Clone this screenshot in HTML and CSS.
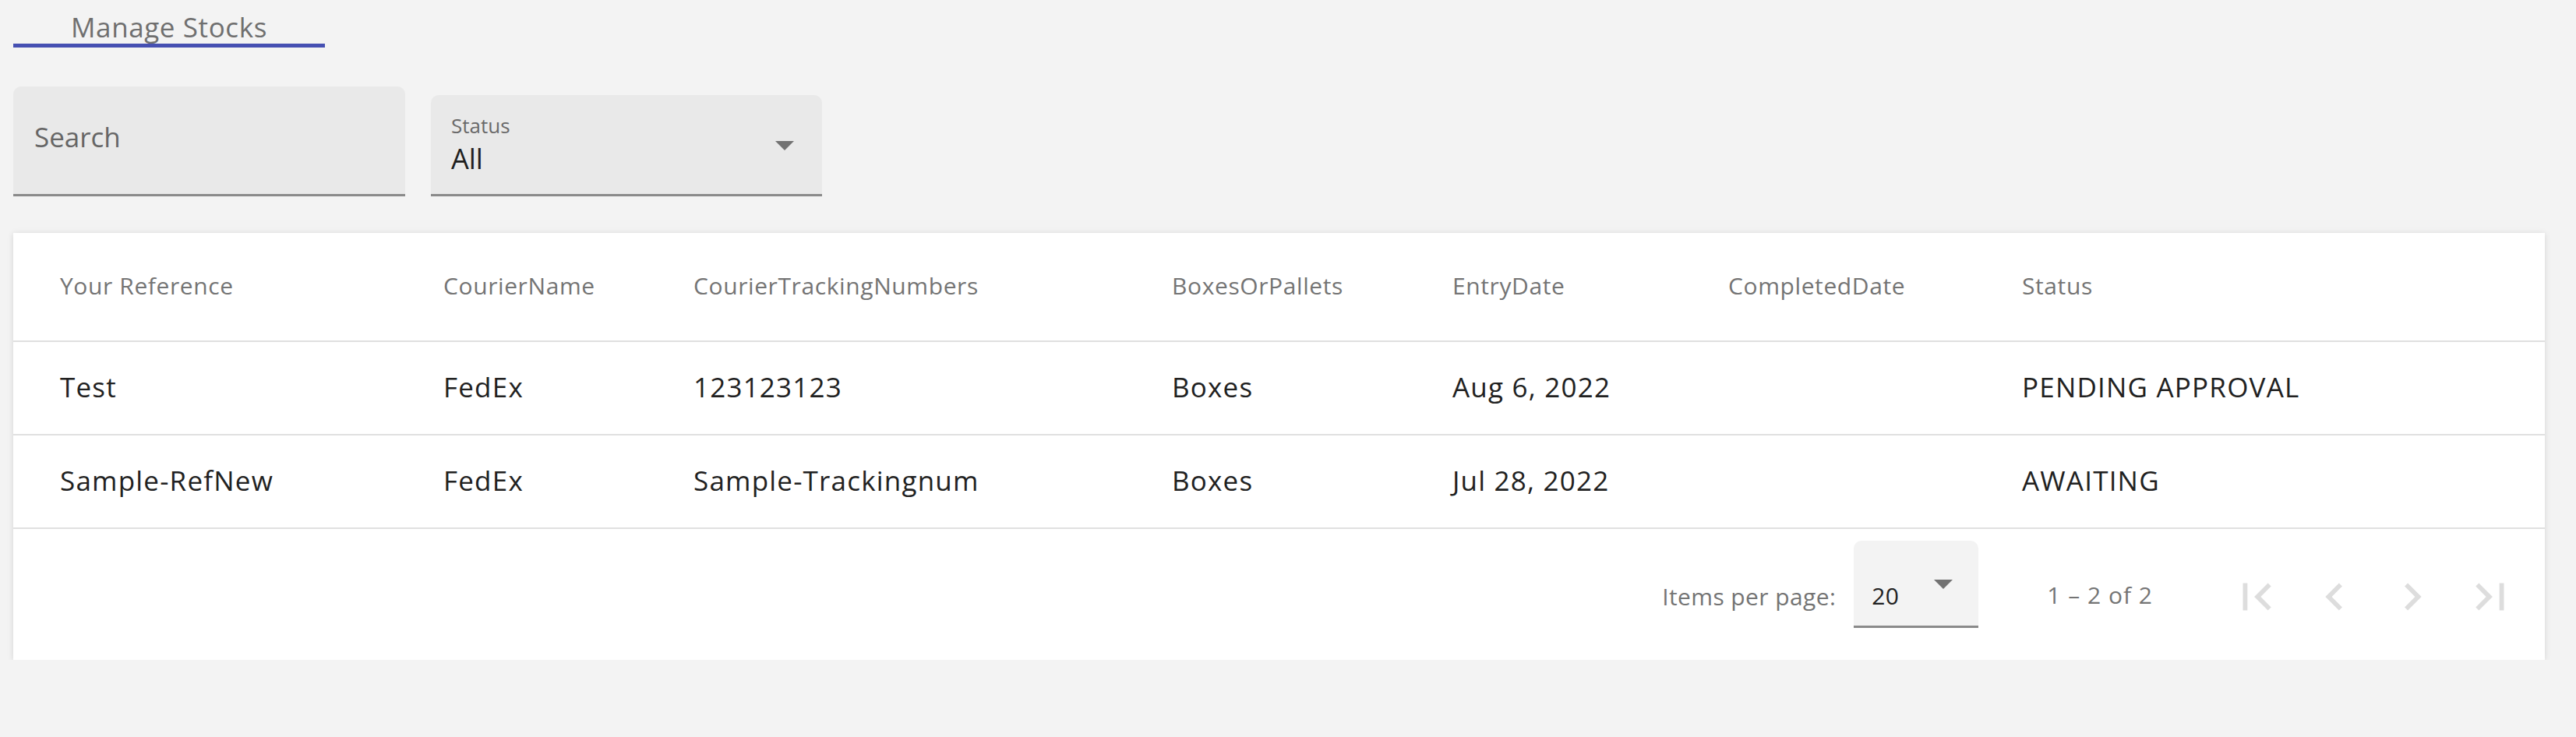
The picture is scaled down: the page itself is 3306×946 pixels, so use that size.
FILE: index.html
```html
<!DOCTYPE html>
<html lang="en">
<head>
  <meta charset="UTF-8" />
  <title>Manage Stocks</title>
  <link rel="stylesheet" href="styles.css">
</head>
<body>
  <div class="page">
    <div class="tabs">
      <div class="tab active">Manage Stocks</div>
    </div>

    <div class="filters">
      <div class="field search">
        <span class="placeholder">Search</span>
      </div>
      <div class="field status">
        <div class="field-text">
          <div class="label">Status</div>
          <div class="value">All</div>
        </div>
        <span class="arrow"></span>
      </div>
    </div>

    <div class="card">
      <table>
        <colgroup>
          <col class="c-ref">
          <col class="c-courier">
          <col class="c-tracking">
          <col class="c-boxes">
          <col class="c-entry">
          <col class="c-completed">
          <col class="c-status">
        </colgroup>
        <thead>
          <tr>
            <th>Your Reference</th>
            <th>CourierName</th>
            <th>CourierTrackingNumbers</th>
            <th>BoxesOrPallets</th>
            <th>EntryDate</th>
            <th>CompletedDate</th>
            <th>Status</th>
          </tr>
        </thead>
        <tbody id="stock-table">
          <tr>
            <td>Test</td>
            <td>FedEx</td>
            <td>123123123</td>
            <td>Boxes</td>
            <td>Aug 6, 2022</td>
            <td></td>
            <td>PENDING APPROVAL</td>
          </tr>
          <tr>
            <td>Sample-RefNew</td>
            <td>FedEx</td>
            <td>Sample-Trackingnum</td>
            <td>Boxes</td>
            <td>Jul 28, 2022</td>
            <td></td>
            <td>AWAITING</td>
          </tr>
        </tbody>
      </table>

      <div class="paginator">
        <span class="page-label">Items per page:</span>
        <div class="page-size">
          <span>20</span>
          <span class="arrow"></span>
        </div>
        <span class="range">1 &ndash; 2 of 2</span>
        <button class="nav" disabled>
          <svg viewBox="0 0 24 24"><path d="M18.41 16.59L13.82 12l4.59-4.59L17 6l-6 6 6 6zM6 6h2v12H6z"/></svg>
        </button>
        <button class="nav" disabled>
          <svg viewBox="0 0 24 24"><path d="M15.41 7.41L14 6l-6 6 6 6 1.41-1.41L10.83 12z"/></svg>
        </button>
        <button class="nav" disabled>
          <svg viewBox="0 0 24 24"><path d="M10 6L8.59 7.41 13.17 12l-4.58 4.59L10 18l6-6z"/></svg>
        </button>
        <button class="nav" disabled>
          <svg viewBox="0 0 24 24"><path d="M5.59 7.41L10.18 12l-4.59 4.59L7 18l6-6-6-6zM16 6h2v12h-2z"/></svg>
        </button>
      </div>
    </div>
  </div>
</body>
</html>
```

FILE: styles.css
```css
body {
  margin: 0;
  background-color: #f3f3f3;
  font-family: "Open Sans", "Noto Sans", sans-serif;
  color: #212121;
}
.page {
  padding: 0 40px 0 17px;
}

/* tabs */
.tabs {
  display: flex;
}
.tab {
  box-sizing: border-box;
  width: 400px;
  height: 61px;
  padding-top: 17px;
  text-align: center;
  font-size: 35px;
  line-height: 35px;
  letter-spacing: 0.6px;
  color: #6f6f6f;
}
.tab.active {
  border-bottom: 5px solid #4650b2;
}

/* filters */
.filters {
  display: flex;
  align-items: flex-end;
  gap: 33px;
  margin-top: 50px;
}
.field {
  box-sizing: border-box;
  background-color: #e9e9e9;
  border-radius: 10px 10px 0 0;
  border-bottom: 3px solid #8a8a8a;
}
.search {
  width: 503px;
  height: 141px;
  padding: 0 0 9px 27px;
  display: flex;
  align-items: center;
}
.placeholder {
  font-size: 35px;
  color: #666;
}
.status {
  width: 502px;
  height: 130px;
  padding: 21px 36px 0 26px;
  display: flex;
  align-items: flex-start;
}
.field-text {
  flex: 1;
}
.label {
  font-size: 26px;
  color: #6a6a6a;
}
.value {
  font-size: 36px;
  color: #1f1f1f;
}
.arrow {
  width: 0;
  height: 0;
  border-left: 12px solid transparent;
  border-right: 12px solid transparent;
  border-top: 12px solid #727272;
}
.status .arrow {
  margin-top: 38px;
}

/* table card */
.card {
  margin-top: 47px;
  background-color: #fff;
  box-shadow: 0 1px 8px rgba(0, 0, 0, 0.12);
}
table {
  width: 100%;
  table-layout: fixed;
  border-collapse: collapse;
}
.c-ref { width: 552px; }
.c-courier { width: 321px; }
.c-tracking { width: 614px; }
.c-boxes { width: 360px; }
.c-entry { width: 354px; }
.c-completed { width: 377px; }
.c-status { width: 671px; }
th, td {
  padding: 0 0 3px;
  text-align: left;
  font-weight: normal;
  white-space: nowrap;
  border-bottom: 2px solid #e0e0e0;
}
th:first-child, td:first-child {
  padding-left: 60px;
}
th {
  height: 135px;
  font-size: 30px;
  letter-spacing: 0.6px;
  color: #747474;
}
td {
  height: 115px;
  font-size: 35px;
  letter-spacing: 1.2px;
  color: #212121;
}

/* paginator */
.paginator {
  height: 168px;
  padding-right: 20px;
  display: flex;
  align-items: center;
  justify-content: flex-end;
  font-size: 30px;
  letter-spacing: 0.4px;
  color: #747474;
}
.page-label {
  margin-right: 23px;
  padding-top: 4px;
}
.page-size {
  box-sizing: border-box;
  align-self: flex-start;
  margin-top: 15px;
  width: 160px;
  height: 112px;
  padding: 50px 33px 0 23px;
  display: flex;
  align-items: flex-start;
  justify-content: space-between;
  background-color: #f3f3f3;
  border-radius: 10px 10px 0 0;
  border-bottom: 3px solid #8a8a8a;
}
.page-size span:first-child {
  color: #212121;
}
.range {
  margin: 0 83px 0 88px;
  letter-spacing: 1px;
}
.nav {
  width: 100px;
  height: 100px;
  margin: 5px 0 0;
  padding: 0;
  border: none;
  background: none;
  display: flex;
  align-items: center;
  justify-content: center;
}
.nav svg {
  width: 70px;
  height: 70px;
  fill: #dddddd;
}
```
